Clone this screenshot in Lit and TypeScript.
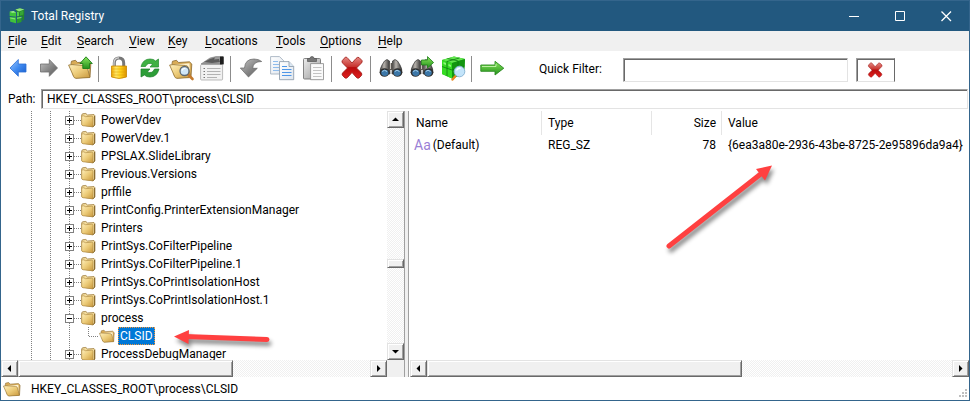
import { LitElement, html, svg, css, nothing, type TemplateResult } from "lit";
import { customElement } from "lit/decorators.js";
import { classMap } from "lit/directives/class-map.js";

const defs = svg`
  <linearGradient id="blue" x1="0" y1="0" x2="1" y2="1"><stop offset="0" stop-color="#9cc8ff"/><stop offset=".5" stop-color="#3f8af0"/><stop offset="1" stop-color="#1559c8"/></linearGradient>
  <linearGradient id="grey" x1="0" y1="0" x2="1" y2="1"><stop offset="0" stop-color="#c4c4c4"/><stop offset=".5" stop-color="#8a8a8a"/><stop offset="1" stop-color="#555"/></linearGradient>
  <linearGradient id="gold" x1="0" y1="0" x2="1" y2="1"><stop offset="0" stop-color="#fff0bd"/><stop offset=".5" stop-color="#eccb78"/><stop offset="1" stop-color="#c8973c"/></linearGradient>
  <linearGradient id="green" x1="0" y1="0" x2="0" y2="1"><stop offset="0" stop-color="#8ae65c"/><stop offset="1" stop-color="#23911b"/></linearGradient>
  <linearGradient id="red" x1="0" y1="0" x2="0" y2="1"><stop offset="0" stop-color="#e58a84"/><stop offset=".45" stop-color="#c8342f"/><stop offset=".5" stop-color="#b80c0c"/><stop offset="1" stop-color="#e02020"/></linearGradient>
  <linearGradient id="lock" x1="0" y1="0" x2="1" y2="0"><stop offset="0" stop-color="#f0a800"/><stop offset=".3" stop-color="#ffe869"/><stop offset=".6" stop-color="#ffd21a"/><stop offset="1" stop-color="#dd9300"/></linearGradient>
  <linearGradient id="paper" x1="0" y1="0" x2="1" y2="1"><stop offset="0" stop-color="#ffffff"/><stop offset="1" stop-color="#dfe6ee"/></linearGradient>
  <linearGradient id="board" x1="0" y1="0" x2="1" y2="1"><stop offset="0" stop-color="#ececec"/><stop offset="1" stop-color="#9b9b9b"/></linearGradient>
  <linearGradient id="barrel" x1="0" y1="0" x2="1" y2="0"><stop offset="0" stop-color="#3a3a3a"/><stop offset=".4" stop-color="#b9b4ae"/><stop offset="1" stop-color="#2c2c2c"/></linearGradient>`;

const openFolder = svg`
  <path d="M3 7.500 L3.500 5.200 L7.500 4.300 L9.500 6.500 L20.500 5.800 L22.800 8 L22 21 L8 22 L5.500 20 Z" fill="#d9ac57" stroke="#8a6a31" stroke-width=".8"/>
  <path d="M6 8.500 L20.500 7.300 L21 18 L9 20Z" fill="#fff3cf"/>
  <path d="M.6 9 L4 8.600 L16.500 9.500 Q18.800 9.500 19.300 11.500 L22 21.500 L8 22.300 Q6.300 22.400 5.600 20.500Z" fill="url(#gold)" stroke="#94712f" stroke-width=".8"/>`;

const binoculars = svg`
  <path d="M5.500 5 L8 3.500 L10.500 5 L11 18 L1 17 Q1 12 3 9Z" fill="url(#barrel)" stroke="#333" stroke-width=".7"/>
  <path d="M18.500 5 L16 3.500 L13.500 5 L13 18 L23 17 Q23 12 21 9Z" fill="url(#barrel)" stroke="#333" stroke-width=".7"/>
  <rect x="10" y="7" width="4" height="7" fill="#5a5652"/><rect x="11" y="7" width="1" height="6" fill="#c9c4bd"/>
  <ellipse cx="5.500" cy="16.500" rx="4.800" ry="4.300" fill="#2d2d2d"/><ellipse cx="18.500" cy="16.500" rx="4.800" ry="4.300" fill="#2d2d2d"/>
  <ellipse cx="5.800" cy="16.800" rx="3.600" ry="3.100" fill="#3c77a8"/><ellipse cx="18.200" cy="16.800" rx="3.600" ry="3.100" fill="#3c77a8"/>
  <path d="M3.200 15.500 Q5.500 13 8 15.500 M15.800 15.500 Q18 13 20.500 15.500" stroke="#a8d1ec" fill="none"/>`;

const cross = svg`
  <path d="M5.500 1 Q7 1 8 2.500 L12 7 L16 2.500 Q17.500 .8 19 1.500 L22 4.500 Q22.800 6 21 7.500 L16.500 12 L21 16.500 Q22.500 18 21.500 19.500 L19 22 Q17.500 22.800 16 21 L12 16.500 L8 21 Q6.500 22.800 5 22 L2.500 19.500 Q1.300 18 3 16.500 L7.500 12 L3 7.500 Q1.200 6 2.300 4.500Z" fill="url(#red)" stroke="#9c1512" stroke-width=".8"/>`;

const cube = svg`
  <path d="M1 4 L13 .6 L24 3 L23 18 L11 22.500 L1 18Z" fill="#22b51b"/>
  <path d="M1 4 L13 .6 L24 3 L11 7Z" fill="#63e64f"/>
  <path d="M1 4 L11 7 V22.500 L1 18Z" fill="#35db22"/>
  <path d="M11 7 L24 3 L23 18 L11 22.500Z" fill="#129510"/>
  <path d="M1 10.500 L11 14 L23.500 10 M6 5.500 V20 M17 5 V20 M6.500 2.500 L17.500 5 M18.500 2 L6 5.500" fill="none" stroke="#0d7c10" stroke-width=".8"/>
  <path d="M2.500 6 L5 7 V9 L2.500 8Z M7.500 8 L10 9 V11 L7.500 10Z" fill="#8df57a"/>`;

const logo = svg`
  <path d="M1 6 L7 4.500 L11 7 L11 13.500 L1 12.500Z" fill="#3fc23a"/><path d="M1 6 L7 4.500 L11 7 L5 7.500Z" fill="#a5ee93"/>
  <path d="M1 14 L11 15 V24 L2 21.500Z" fill="#3fc23a"/><path d="M2 15 L9.500 16 V18 L2 16.500Z" fill="#86e274"/>
  <path d="M12.500 15 L19.500 13.500 V22 L12.500 24Z" fill="#2a9d2a"/><path d="M12.500 15 L19.500 13.500 V15.500 L12.500 17Z" fill="#6fd65f"/>
  <path d="M10 2.500 L17 .5 L24 2.500 L23.500 18.500 L20.500 20 V12.500 L12.500 13.500 V6.500Z" fill="#23862a"/>
  <path d="M10 2.500 L17 .5 L24 2.500 L15.500 5.500Z" fill="#8ee37c"/><path d="M12.500 6 L15.500 6.500 V12.500 L12.500 13Z" fill="#58cf4c"/>
  <path d="M17 6 L22.500 4 V10 L17 12Z" fill="#36a637"/>`;

const icons: Record<string, TemplateResult> = {
  back: svg`<path d="M4 12 L12.300 3.500 V8 H20 V16 H12.300 V20.300Z" fill="url(#blue)" stroke="#2c6fd6" stroke-width=".8"/>`,
  forward: svg`<path d="M20.500 12 L12.300 3.500 V8 H3.500 V16 H12.300 V20.300Z" fill="url(#grey)" stroke="#6f6f6f" stroke-width=".8"/>`,
  up: svg`${openFolder}<path d="M18 .8 L24.300 7.500 H21.500 V12.500 H14.800 V7.500 H12Z" fill="url(#green)" stroke="#1c7d17" stroke-width=".9"/>`,
  lock: svg`<path d="M7.300 11 V7 Q7.300 2 12 2 Q16.700 2 16.700 7 V11" fill="none" stroke="#777" stroke-width="3"/>
    <path d="M7 11 V7 Q7 1.800 12 1.800" fill="none" stroke="#d6d6d6" stroke-width="1.200"/>
    <path d="M4.500 10 H19.500 V21 Q12 24 4.500 21Z" fill="url(#lock)" stroke="#c88700" stroke-width=".8"/>
    <path d="M5 13 H19 M5 16 H19 M5 19 H19" stroke="#d99a00" stroke-width=".7" opacity=".7"/>`,
  refresh: svg`<path d="M3 10.500 Q5 3 12 3 Q16 3 17.500 5 L20.500 3 V11 H12 L14.700 8 Q9.500 6 7.500 10.500Z" fill="#3fb143" stroke="#218a2c" stroke-width=".7"/>
    <path d="M21 13 Q19 21 12 21 Q8 21 6.500 19 L3 21 V13 H12 L9.300 16 Q14.500 18 16.500 13Z" fill="#2d9e38" stroke="#1b7c28" stroke-width=".7"/>`,
  find: svg`${openFolder}<path d="M18.500 18 L23.500 23" stroke="#c47a2e" stroke-width="2.600" stroke-linecap="round"/>
    <circle cx="15.500" cy="15" r="4.500" fill="#cfe6f7" stroke="#5d6770" stroke-width="1.300"/><path d="M13 14.500 Q14 12 16.500 12.300" stroke="#fff" stroke-width="1.200" fill="none"/>`,
  properties: svg`<rect x=".6" y="8.500" width="22" height="15.500" rx="1" fill="#f1f1f1" stroke="#aaa" stroke-width=".8"/>
    <path d="M1 8 L10 2 L16 .6 H23 V8Z" fill="#9b9b9b" stroke="#777" stroke-width=".6"/>
    <path d="M4 6 L10 3 L15 1.500 L14 3.500 L19 3 L20 6 L12 7Z" fill="#5b5b5b"/><rect x="20" y=".6" width="3.700" height="7.800" fill="#1e1e1e"/>
    <path d="M3.500 12.500 H5 M3.500 15.500 H5 M3.500 18.500 H5 M3.500 21.500 H5" stroke="#777"/>
    <path d="M7 12.500 H20.500 M7 15.500 H20.500 M7 18.500 H20.500 M7 21.500 H17" stroke="#b2b2b2"/>`,
  undo: svg`<path d="M1.300 12 H5.500 Q6 3 15 3 Q20 3 22.700 5.500 Q14 5.500 13.700 12.300 H18.300 L9.500 21Z" fill="url(#grey)" stroke="#666" stroke-width=".7"/>`,
  copy: svg`<path d="M.6 .6 H9.500 L13.500 4.600 V18 H.6Z" fill="url(#paper)" stroke="#9aa8b8" stroke-width=".8"/>
    <path d="M3 5.500 H8 M3 8.500 H9 M3 11.500 H9 M3 14.500 H9" stroke="#8fbcec"/>
    <path d="M9.500 5.600 H19 L23.700 10.500 V23.700 H9.500Z" fill="url(#paper)" stroke="#8795a5" stroke-width=".8"/>
    <path d="M19 5.600 V10.500 H23.700" fill="#dce8f4" stroke="#8795a5" stroke-width=".8"/>
    <path d="M12 10.500 H17 M12 13.500 H21.500 M12 16.500 H21.500 M12 19.500 H21.500" stroke="#4d96e8"/>`,
  paste: svg`<rect x="2.500" y="2.500" width="17" height="20.500" rx="1" fill="url(#board)" stroke="#777" stroke-width=".9"/>
    <path d="M6.500 5.500 V2.500 H9 Q9 .5 11 .5 Q13 .5 13 2.500 H15.500 V5.500Z" fill="#777" stroke="#555" stroke-width=".7"/>
    <path d="M9.600 7.600 H22.500 V23.700 H9.600Z" fill="#fafafa" stroke="#888" stroke-width=".8"/>
    <path d="M12 11.500 H20.500 M12 14.500 H20.500 M12 17.500 H20.500 M12 20.500 H20.500" stroke="#c3c3c3"/>`,
  remove: cross,
  binoculars,
  next: svg`${binoculars}<path d="M11.500 4 H17.500 V.6 L23.600 6.500 L17.500 12 V9 H11.500Z" fill="url(#green)" stroke="#1c7d17" stroke-width=".8"/>`,
  scan: svg`${cube}<path d="M14.500 20 L11.500 23.500" stroke="#e8871e" stroke-width="2.400" stroke-linecap="round"/><circle cx="18.500" cy="15.500" r="5.300" fill="#c3e4fa" stroke="#8fb8d8"/><path d="M15.500 14.500 Q16.500 12 19.500 12.300" stroke="#fff" stroke-width="1.300" fill="none"/>`,
  go: svg`<path d="M.8 9 H15 V5.300 L23.800 12.200 L15 19 V15.300 H.8Z" fill="url(#green)" stroke="#2a8a20" stroke-width=".9"/><path d="M2 10.500 H16 V8" fill="none" stroke="#c5f5ab" stroke-width=".9"/>`,
  logo,
};

const icon = (name: string, cls = "icon") =>
  html`<svg class=${cls} viewBox="0 0 25 25" aria-hidden="true"><defs>${defs}</defs>${icons[name]}</svg>`;

const folderClosed = html`<svg class="folder" viewBox="0 0 16 16" aria-hidden="true"><defs>${defs}</defs>
  <path d="M1.700 3 L2.500 1.800 L5.800 1.500 L7.500 3 L14 2.600 L14.800 3.600 V13 L13 14.800 L2 13Z" fill="#f3dc9d" stroke="#9a7838" stroke-width=".8"/>
  <path d="M1.700 4 Q4 3.300 5.500 4.700 L11.500 4.200 Q13 4.200 13 5.500 V14.800 L3.300 13.800 Q1.700 13.500 1.700 12.500Z" fill="url(#gold)" stroke="#b18c43" stroke-width=".7"/>
  <path d="M14.600 4 V13 L13 14.800" stroke="#7d5d22" fill="none" stroke-width=".9"/></svg>`;

const folderOpen = html`<svg class="folder" viewBox="0 2 24 22" aria-hidden="true"><defs>${defs}</defs>${openFolder}</svg>`;

type Guide = "line" | "plus" | "minus" | "elbow";

const guide = (kind: Guide) => html`<svg class="guide" viewBox="0 0 19 18" aria-hidden="true">
  <path class="dots" d=${kind === "elbow" ? "M9.5 0 V9 M10 9.5 H19" : "M9.5 0 V18"} />
  ${kind === "plus" || kind === "minus"
    ? svg`<path class="dots" d="M14 9.5 H21"/><rect class="box" x="5.5" y="5.5" width="8" height="8"/><path class="sign" d=${kind === "plus" ? "M7 9.5 H12 M9.5 7 V12" : "M7 9.5 H12"}/>`
    : nothing}</svg>`;

interface Node { name: string; guides: Guide[]; open?: boolean; selected?: boolean }

const closed = (name: string): Node => ({ name, guides: ["line", "line", "plus"] });

const nodes: Node[] = [
  ...["PowerVdev", "PowerVdev.1", "PPSLAX.SlideLibrary", "Previous.Versions", "prffile",
    "PrintConfig.PrinterExtensionManager", "Printers", "PrintSys.CoFilterPipeline",
    "PrintSys.CoFilterPipeline.1", "PrintSys.CoPrintIsolationHost", "PrintSys.CoPrintIsolationHost.1"].map(closed),
  { name: "process", guides: ["line", "line", "minus"] },
  { name: "CLSID", guides: ["line", "line", "line", "elbow"], open: true, selected: true },
  closed("ProcessDebugManager"),
];

const menus = ["File", "Edit", "Search", "View", "Key", "Locations", "Tools", "Options", "Help"];

const tools: [string, string][][] = [
  [["back", "Back"], ["forward", "Forward"], ["up", "Up one level"]],
  [["lock", "Read only"], ["refresh", "Refresh"], ["find", "Open key"], ["properties", "Properties"]],
  [["undo", "Undo"], ["copy", "Copy"], ["paste", "Paste"]],
  [["remove", "Delete"]],
  [["binoculars", "Find"], ["next", "Find next"], ["scan", "Find all"]],
  [["go", "Go to key"]],
];

@customElement("scroll-bar")
export class ScrollBar extends LitElement {
  static properties = { vertical: { type: Boolean, reflect: true }, before: { type: Number }, thumb: { type: Number } };
  declare vertical: boolean;
  declare before: number;
  declare thumb: number;

  static styles = css`
    :host { display: flex; height: 17px; background: repeating-conic-gradient(#f0f0f0 0 25%, #fff 0 50%) 0 0 / 2px 2px; }
    :host([vertical]) { flex-direction: column; width: 17px; height: auto; }
    button, .thumb {
      box-sizing: border-box; padding: 0; background: #f0f0f0;
      border: 1px solid; border-color: #e3e3e3 #696969 #696969 #e3e3e3;
      box-shadow: inset 1px 1px #fff, inset -1px -1px #a0a0a0;
    }
    button { flex: none; display: grid; place-items: center; width: 17px; height: 17px; }
    svg { width: 7px; height: 7px; }
    .track { flex: 1; display: flex; flex-direction: inherit; min-width: 0; min-height: 0; }
  `;

  render() {
    const [a, b] = this.vertical ? ["M0 5 H7 L3.5 1.500Z", "M0 2 H7 L3.5 5.500Z"] : ["M5 0 V7 L1.500 3.500Z", "M2 0 V7 L5.500 3.500Z"];
    const size = this.vertical ? "height" : "width";
    return html`
      <button aria-label="Scroll back"><svg viewBox="0 0 7 7"><path d=${a} /></svg></button>
      <div class="track">
        <div style="${size}:${this.before}%"></div>
        <div class="thumb" style="${size}:${this.thumb}%"></div>
      </div>
      <button aria-label="Scroll forward"><svg viewBox="0 0 7 7"><path d=${b} /></svg></button>`;
  }
}

@customElement("app-root")
export class AppRoot extends LitElement {
  static styles = css`
    :host {
      display: flex; flex-direction: column; box-sizing: border-box; height: 100vh; position: relative; overflow: hidden;
      border: 1px solid #34658c; background: #fff; color: #000;
      font: 12px/18px Roboto, "Open Sans", sans-serif;
    }
    button, input { font: inherit; color: inherit; border-radius: 0; }
    button { padding: 0; border: 0; background: none; }
    .titlebar { flex: none; display: flex; align-items: center; height: 30px; padding-left: 8px; background: #22587f; color: #fff; }
    .logo { width: 16px; height: 16px; margin-right: 6px; }
    .title { flex: 1; margin: 0; font: inherit; }
    .caption { width: 46px; height: 30px; display: grid; place-items: center; }
    .caption svg { width: 11px; height: 11px; fill: none; stroke: #fff; }
    .menubar {
      flex: none; display: grid; grid-template-columns: 33px 36px 52px 39px 37px 71px 44px 58px auto;
      height: 20px; padding-left: 7px; background: #f0f0f0; justify-content: start; text-align: left;
    }
    .menubar button { text-align: left; white-space: nowrap; }
    .menubar u { text-underline-offset: 2px; }
    .toolbar { flex: none; display: flex; align-items: center; height: 35px; padding-left: 2px; }
    .tool { flex: none; width: 31px; height: 31px; display: grid; place-items: center; }
    .icon { width: 25px; height: 25px; overflow: visible; }
    .separator { flex: none; width: 1px; height: 26px; margin: 0 5px 0 2px; background: #8c8c8c; }
    .filter { display: flex; align-items: center; margin-left: 31px; }
    .filter label { width: 84px; }
    .sunken {
      box-sizing: border-box; min-width: 0; border: 1px solid; border-color: #a0a0a0 #e3e3e3 #e3e3e3 #a0a0a0;
      box-shadow: inset 1px 1px #696969; background: #fff; outline: 0;
    }
    .filter input { width: 225px; height: 24px; margin: 3px 8px 0 0; padding: 0 5px; }
    .clear {
      display: grid; place-items: center; width: 39px; height: 24px; margin-top: 3px; border-right-color: #696969;
    }
    .clear .icon { width: 17px; height: 17px; }
    .path { flex: none; display: flex; align-items: center; padding: 3px 1px 2px 7px; }
    .path label { width: 33px; }
    .path input { flex: 1; height: 20px; padding: 0 5px; }
    .panes { flex: 1; display: grid; grid-template-columns: 403px 1px 3px 2px minmax(0, 1fr); min-height: 0; }
    .left { display: grid; grid-template: minmax(0, 1fr) 17px / minmax(0, 1fr) 17px; min-height: 0; }
    .corner { background: #f0f0f0; }
    .tree { margin: 0; padding: 0 0 0 21px; list-style: none; overflow: hidden; }
    .node { display: flex; height: 18px; white-space: nowrap; }
    .guide { flex: none; width: 19px; height: 18px; overflow: visible; shape-rendering: crispEdges; }
    .dots { fill: none; stroke: #808080; stroke-dasharray: 1 1; }
    .box { fill: #fff; stroke: #808080; }
    .sign { stroke: #000; }
    .folder { flex: none; width: 16px; height: 16px; margin: 1px 3px 1px 1px; }
    .name { box-sizing: border-box; padding: 0 2px; }
    .selected .name { background: #0078d7; color: #fff; outline: 1px dotted #f2973c; outline-offset: -1px; }
    .edge { background: #a0a0a0; }
    .gap { background: #f0f0f0; }
    .second { border-left: 1px solid #a0a0a0; }
    .right { display: flex; flex-direction: column; min-width: 0; }
    .list { flex: 1; }
    table { width: 100%; table-layout: fixed; border-collapse: separate; border-spacing: 0; }
    th, td { padding: 0 6px; border-right: 1px solid transparent; font-weight: 400; text-align: left; white-space: nowrap; }
    th { height: 24px; border-color: #e5e5e5; }
    th:last-child { border-color: transparent; }
    td { height: 20px; }
    .name-column { width: 132px; }
    .type-column { width: 110px; }
    .size-column { width: 70px; }
    .number { text-align: right; padding-right: 5px; }
    .key { display: flex; gap: 2px; margin-left: -2px; }
    .kind { color: #9a7fd6; font-size: 14px; }
    .status { flex: none; display: flex; align-items: center; height: 23px; padding-left: 2px; }
    .status output { flex: 1; padding-left: 10px; }
    .status .folder { width: 18px; height: 18px; margin: 0; }
    .grip { align-self: end; width: 9px; height: 9px; margin: 0 2px 2px 0; fill: #bfbfbf; }
    .arrow { position: absolute; overflow: visible; pointer-events: none; filter: drop-shadow(2px 4px 2px #0007); fill: #ff4040; stroke: #ff4040; }
    .to-key { left: 172px; top: 326px; width: 98px; height: 20px; }
    .to-value { left: 666px; top: 164px; width: 106px; height: 84px; }
  `;

  render() {
    return html`
      <header class="titlebar">
        ${icon("logo", "logo")}
        <h1 class="title">Total Registry</h1>
        <button class="caption" aria-label="Minimize"><svg viewBox="0 0 11 11"><path d="M0 5.500 H10"/></svg></button>
        <button class="caption" aria-label="Maximize"><svg viewBox="0 0 11 11"><path d="M.5 .5 H9.500 V9.500 H.5Z"/></svg></button>
        <button class="caption" aria-label="Close"><svg viewBox="0 0 11 11"><path d="M.5 .5 L10 10 M10 .5 L.5 10" stroke-width="1.300"/></svg></button>
      </header>
      <nav class="menubar">${menus.map((m) => html`<button><u>${m[0]}</u>${m.slice(1)}</button>`)}</nav>
      <div class="toolbar" role="toolbar">
        ${tools.map((group, i) => html`${i ? html`<span class="separator"></span>` : nothing}${group.map(
          ([name, label]) => html`<button class="tool" aria-label=${label}>${icon(name)}</button>`)}`)}
        <div class="filter">
          <label for="filter">Quick Filter:</label>
          <input id="filter" class="sunken" type="text" />
          <button class="clear sunken" aria-label="Clear filter">${icon("remove")}</button>
        </div>
      </div>
      <div class="path">
        <label for="path">Path:</label>
        <input id="path" class="sunken" type="text" .value=${"HKEY_CLASSES_ROOT\\process\\CLSID"} />
      </div>
      <main class="panes">
        <section class="left">
          <ul class="tree" role="tree">
            ${nodes.map((n) => html`<li class=${classMap({ node: true, selected: !!n.selected })} role="treeitem">
              ${n.guides.map(guide)}${n.open ? folderOpen : folderClosed}<span class="name">${n.name}</span></li>`)}
          </ul>
          <scroll-bar vertical .before=${61} .thumb=${4}></scroll-bar>
          <scroll-bar .before=${0} .thumb=${61}></scroll-bar>
          <div class="corner"></div>
        </section>
        <div class="edge"></div><div class="gap"></div><div class="second"></div>
        <section class="right">
          <div class="list">
            <table>
              <colgroup><col class="name-column" /><col class="type-column" /><col class="size-column" /><col /></colgroup>
              <thead><tr><th>Name</th><th>Type</th><th class="number">Size</th><th>Value</th></tr></thead>
              <tbody><tr>
                <td><span class="key"><span class="kind">Aa</span>(Default)</span></td>
                <td>REG_SZ</td><td class="number">78</td><td>{6ea3a80e-2936-43be-8725-2e95896da9a4}</td>
              </tr></tbody>
            </table>
          </div>
          <scroll-bar .before=${0} .thumb=${60}></scroll-bar>
        </section>
      </main>
      <footer class="status">
        ${folderOpen}
        <output>HKEY_CLASSES_ROOT\\process\\CLSID</output>
        <svg class="grip" viewBox="0 0 9 9"><path d="M7 0h2v2h-2z M4 3h2v2h-2z M7 3h2v2h-2z M1 6h2v2h-2z M4 6h2v2h-2z M7 6h2v2h-2z"/></svg>
      </footer>
      <svg class="arrow to-key" viewBox="0 0 98 20"><path d="M12 9.500 L94 12.500" stroke-width="5" stroke-linecap="round"/><path d="M1 9.500 L16 3 L15.500 17Z" stroke="none"/></svg>
      <svg class="arrow to-value" viewBox="0 0 106 84"><path d="M2 81 L95 8" stroke-width="5" stroke-linecap="round"/><path d="M105 .5 L89 4 L98 15.500Z" stroke="none"/></svg>`;
  }
}
